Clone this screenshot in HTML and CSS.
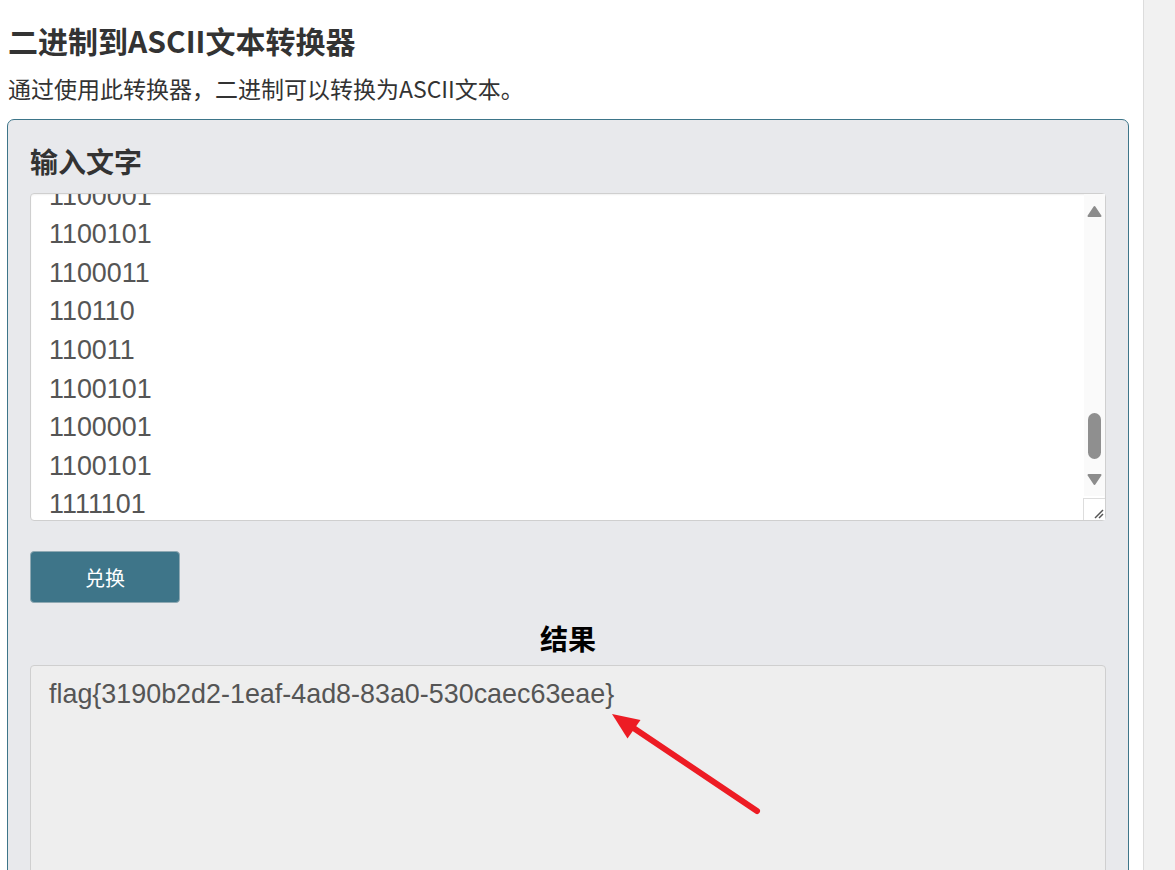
FILE: index.html
```html
<!DOCTYPE html>
<html lang="zh">
<head>
  <meta charset="UTF-8" />
  <meta name="viewport" content="width=device-width, initial-scale=1.0"/>
  <title>二进制到ASCII文本转换器</title>
  <link rel="stylesheet" href="styles.css">
</head>
<body>

<div class="page">
  <h1 class="title">二进制到ASCII文本转换器</h1>
  <p class="intro">通过使用此转换器，二进制可以转换为ASCII文本。</p>

  <div class="panel">
    <h2 class="label">输入文字</h2>
    <div class="input-wrap">
      <textarea id="input" class="input-box" spellcheck="false">1100110
1101100
1100001
1100111
1111011
110011
110001
111001
110000
1100010
110010
1100100
110010
101101
110001
1100101
1100001
1100110
101101
110100
1100001
1100100
111000
101101
111000
110011
1100001
110000
101101
110101
110011
110000
1100011
1100001
1100101
1100011
110110
110011
1100101
1100001
1100101
1111101</textarea>
      <!-- scrollbar of the textarea -->
      <div class="ta-bar">
        <div class="ta-btn">
          <svg width="21" height="30" viewBox="0 0 21 30"><polygon points="4.5,22 16.5,22 10.5,13" fill="#8c8c8c" stroke="#8c8c8c" stroke-width="2" stroke-linejoin="round"/></svg>
        </div>
        <div class="ta-track"><div class="ta-thumb"></div></div>
        <div class="ta-btn">
          <svg width="21" height="30" viewBox="0 0 21 30"><polygon points="4.5,9 16.5,9 10.5,18" fill="#8c8c8c" stroke="#8c8c8c" stroke-width="2" stroke-linejoin="round"/></svg>
        </div>
      </div>
      <div class="ta-grip">
        <svg width="21" height="21" viewBox="0 0 21 21"><path d="M11 19 L19 11 M15 19 L19 15" stroke="#555" stroke-width="1.5" fill="none"/></svg>
      </div>
    </div>

    <button type="button" class="convert-btn">兑换</button>

    <h2 class="result-label">结果</h2>
    <div class="result-wrap">
      <textarea class="result-box" readonly spellcheck="false">flag{3190b2d2-1eaf-4ad8-83a0-530caec63eae}</textarea>
      <svg class="arrow" width="760" height="205" viewBox="0 0 760 205">
        <line x1="727" y1="146" x2="602" y2="62" stroke="#ed1c24" stroke-width="6" stroke-linecap="round"/>
        <polygon points="582,49 610.5,55 597.5,73.5" fill="#ed1c24"/>
      </svg>
    </div>
  </div>
</div>

<div class="page-scroll"></div>

<script src="script.js"></script>
</body>
</html>
```

FILE: styles.css
```css
html, body {
  height: 100%;
}

body {
  margin: 0;
  display: flex;
  overflow: hidden;
  background-color: #fff;
  color: #333;
  font-family: "Noto Sans CJK SC", "Noto Sans", sans-serif;
}

.page {
  flex: 1;
  padding: 0 14px 0 7px;
}

.page-scroll {
  width: 31px;
  background-color: #f1f1f1;
  border-left: 1px solid #dcdcdc;
}

.title {
  margin: 22px 0 0 1px;
  font-size: 30px;
  line-height: 37px;
  font-weight: 700;
  color: #333;
}

.intro {
  margin: 13px 0 0 1px;
  font-size: 23px;
  line-height: 32px;
  color: #333;
}

.panel {
  margin-top: 15px;
  padding: 23px 22px 0 22px;
  background-color: #e8e9ec;
  border: 1px solid #3d7589;
  border-radius: 7px;
  height: 760px;
  box-sizing: border-box;
}

.label {
  margin: 0;
  font-size: 28px;
  line-height: 36px;
  font-weight: 700;
  color: #333;
}

.input-wrap {
  position: relative;
  margin-top: 14px;
}

.input-box,
.result-box {
  display: block;
  width: 100%;
  box-sizing: border-box;
  font-family: "Liberation Sans", Arial, sans-serif;
  font-size: 26.9px;
  line-height: 38.6px;
  color: #555;
  border: 1px solid #cfcfcf;
  border-radius: 4px;
  resize: none;
  outline: none;
}

.input-box {
  height: 328px;
  padding: 4px 40px 0 18px;
  overflow: hidden;
  background-color: #fff;
  box-shadow: inset 0 1px 2px rgba(0, 0, 0, 0.06);
}

/* fake scrollbar over the textarea */
.ta-bar {
  position: absolute;
  top: 1px;
  right: 1px;
  width: 21px;
  height: 302px;
  display: flex;
  flex-direction: column;
  background-color: #fafafa;
}

.ta-btn {
  height: 30px;
}

.ta-btn svg {
  display: block;
}

.ta-track {
  flex: 1;
}

.ta-thumb {
  margin: 189px auto 0 auto;
  width: 13px;
  height: 46px;
  border-radius: 7px;
  background-color: #8f8f8f;
}

.ta-grip {
  position: absolute;
  right: 1px;
  bottom: 1px;
  width: 21px;
  height: 21px;
  border-top: 1px solid #ddd;
  border-left: 1px solid #ddd;
  background-color: #fff;
}

.ta-grip svg {
  display: block;
}

.convert-btn {
  display: block;
  margin-top: 30px;
  width: 150px;
  height: 52px;
  background-color: #3e7589;
  color: #fff;
  border: 1px solid #8fa9b3;
  border-radius: 4px;
  font-family: "Noto Sans CJK SC", sans-serif;
  font-size: 20px;
  cursor: pointer;
}

.result-label {
  margin: 17px 0 0 0;
  text-align: center;
  font-size: 28px;
  line-height: 36px;
  font-weight: 700;
  color: #000;
}

.result-wrap {
  position: relative;
  margin-top: 9px;
}

.result-box {
  height: 320px;
  padding: 9px 18px;
  background-color: #eee;
}

.arrow {
  position: absolute;
  top: 0;
  left: 0;
  pointer-events: none;
}
```

FILE: script.js
```js
// keep the input scrolled to the end, like after pasting
var input = document.getElementById('input');
input.scrollTop = input.scrollHeight - input.clientHeight - 4;
```
